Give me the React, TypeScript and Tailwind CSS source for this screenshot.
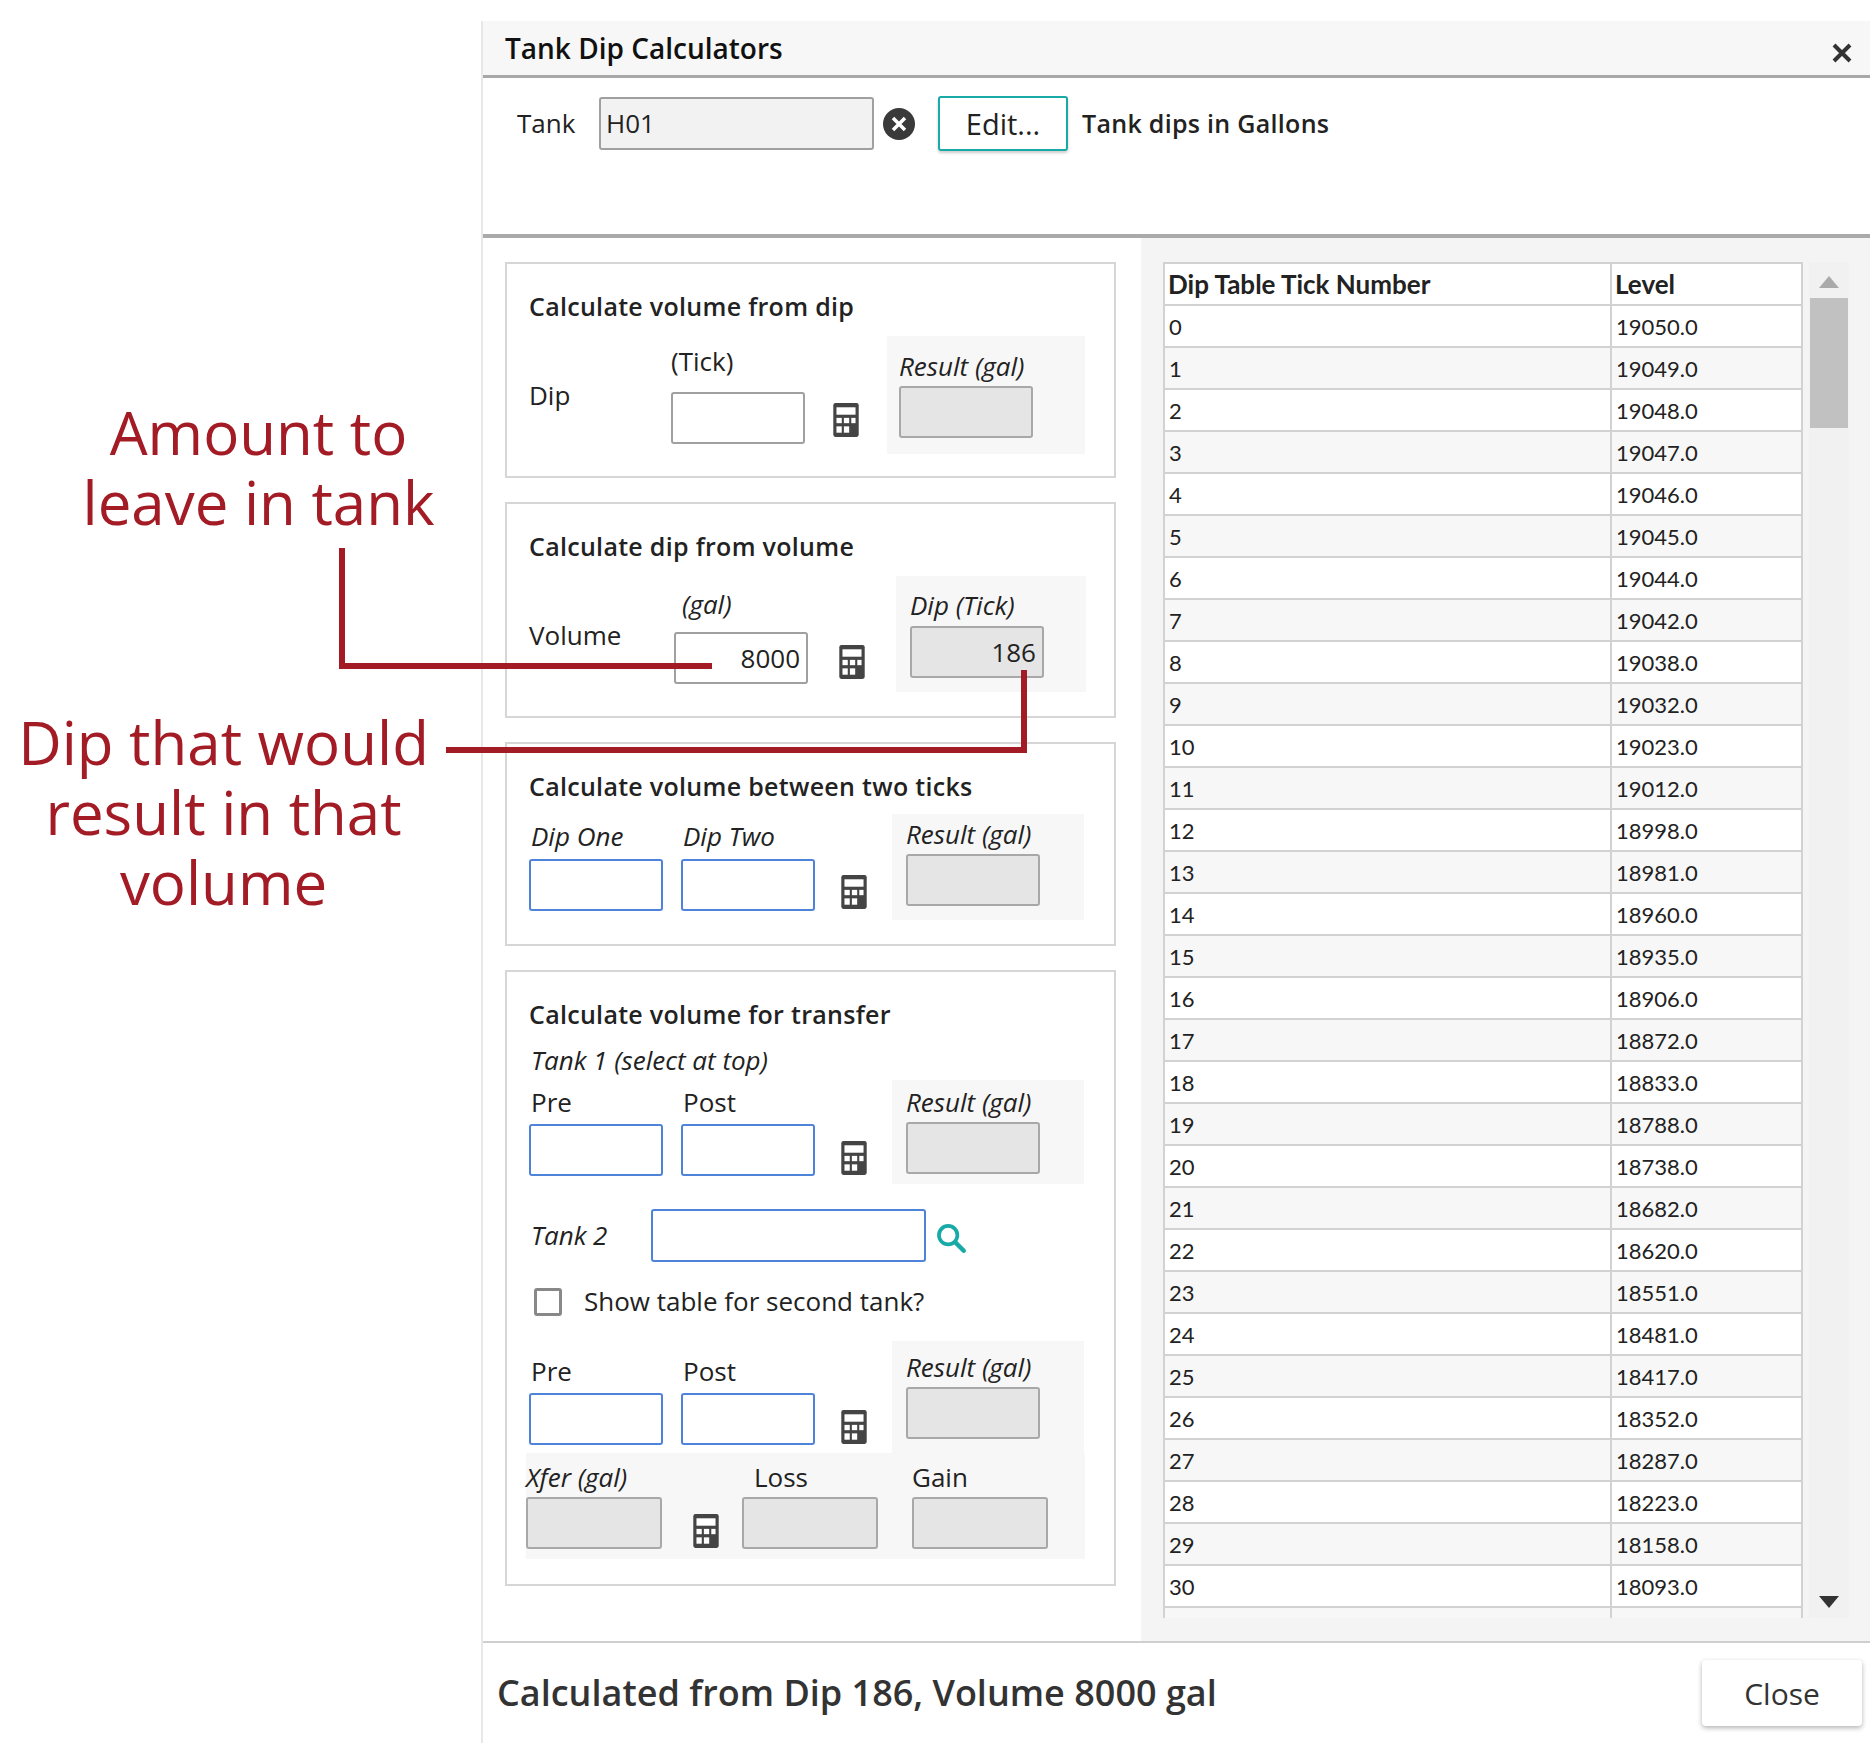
import React from "react";

const F = { fontFamily: '"Open Sans", "Noto Sans", sans-serif' };
const T = { fontFamily: 'Lato, "Noto Sans", sans-serif' };

function Inp({ kind = "gray", w = 134, h = 52, v = "" }: { kind?: string; w?: number; h?: number; v?: string }) {
  const cls =
    kind === "blue"
      ? "border-2 border-[#4f82d9] bg-white"
      : kind === "ro"
      ? "border-2 border-[#a8a8a8] bg-[#e5e5e5]"
      : "border-2 border-[#a0a0a0] bg-white";
  return (
    <div className={`${cls} rounded-[3px] flex items-center justify-end pr-[6px] text-[26px] text-[#222]`} style={{ width: w, height: h }}>
      {v}
    </div>
  );
}

function Calc() {
  return (
    <svg width="28" height="36" viewBox="0 0 26 34">
      <rect x="1" y="1" width="24" height="32" rx="2" fill="#444" />
      <rect x="4" y="5" width="18" height="7" fill="#fff" />
      <rect x="4" y="15" width="5" height="5" fill="#fff" />
      <rect x="11" y="15" width="5" height="5" fill="#fff" />
      <rect x="18" y="15" width="4" height="5" fill="#fff" />
      <rect x="4" y="23" width="5" height="6" fill="#fff" />
      <rect x="11" y="23" width="5" height="6" fill="#fff" />
    </svg>
  );
}

function Section({ title, h, children }: { title: string; h: number; children: React.ReactNode }) {
  return (
    <div className="border-2 border-[#d6d6d6] bg-white pl-[22px] pt-[26px]" style={{ height: h }}>
      <div className="text-[25px] font-semibold text-[#222] h-[32px] leading-[32px] tracking-[0.3px]">{title}</div>
      {children}
    </div>
  );
}

const levels = [19050,19049,19048,19047,19046,19045,19044,19042,19038,19032,19023,19012,18998,18981,18960,18935,18906,18872,18833,18788,18738,18682,18620,18551,18481,18417,18352,18287,18223,18158,18093,18028];

export default function App() {
  const red = "text-[#a31b24]";
  return (
    <div className="relative w-[1873px] h-[1749px] bg-white flex" style={F}>
      <div className={`w-[481px] shrink-0 ${red} text-[60px] font-medium leading-[70px] text-center`}>
        <div className="pl-[36px] mt-[397px]">Amount to<br />leave in tank</div>
        <div className="pr-[34px] mt-[170px]">Dip that would<br />result in that<br />volume</div>
      </div>
      <svg className="absolute left-0 top-0 pointer-events-none" width="1873" height="1749">
        <polyline points="342,548 342,666 712,666" fill="none" stroke="#a31b24" strokeWidth="6" />
        <polyline points="446,750 1024,750 1024,670" fill="none" stroke="#a31b24" strokeWidth="6" />
      </svg>

      <div className="mt-[21px] w-[1389px] h-[1722px] border-l-2 border-[#e8e8e8] flex flex-col">
        <div className="h-[57px] bg-[#f7f7f7] border-b-[3px] border-[#a8a8a8] flex items-center pl-[22px] pr-[16px] justify-between">
          <div className="text-[28px] font-semibold text-[#111]">Tank Dip Calculators</div>
          <svg width="24" height="24" viewBox="0 0 24 24" className="mt-[10px]"><path d="M4 4 L20 20 M20 4 L4 20" stroke="#333" strokeWidth="4" /></svg>
        </div>
        <div className="h-[160px] border-b-4 border-[#aaa] flex items-start pt-[18px]">
          <div className="flex items-center h-[55px]">
            <div className="ml-[34px] text-[26px] text-[#222] w-[82px]">Tank</div>
            <div className="w-[275px] h-[53px] border-2 border-[#a0a0a0] rounded-[3px] bg-[#f2f2f2] flex items-center pl-[5px] text-[26px] text-[#222]">H01</div>
            <svg width="34" height="34" viewBox="0 0 34 34" className="ml-[8px]"><circle cx="17" cy="17" r="16" fill="#3a3a3a" /><path d="M11 11 L23 23 M23 11 L11 23" stroke="#fff" strokeWidth="3.5" /></svg>
            <div className="ml-[22px] w-[130px] h-[55px] border-2 border-[#19aaa8] rounded-[3px] shadow-[0_2px_3px_rgba(0,0,0,0.2)] flex items-center justify-center text-[29px] text-[#222]">Edit...</div>
            <div className="ml-[14px] text-[25px] font-semibold text-[#222] tracking-[0.3px]">Tank dips in Gallons</div>
          </div>
        </div>
        <div className="flex flex-1">
          <div className="w-[658px] shrink-0 pl-[22px] pt-[24px] pr-[25px] flex flex-col gap-[24px] text-[26px] text-[#222]">
            <Section title="Calculate volume from dip" h={216}>
              <div className="flex mt-[14px]">
                <div className="w-[142px] pt-[40px]">Dip</div>
                <div className="flex flex-col">
                  <div className="h-[50px] leading-[50px]">(Tick)</div>
                  <div className="mt-[6px]"><Inp /></div>
                </div>
                <div className="w-[82px] flex justify-center pt-[66px]"><Calc /></div>
                <div className="w-[198px] h-[118px] bg-[#f7f7f7] pl-[12px] pt-[10px]">
                  <div className="italic h-[40px] leading-[40px]">Result (gal)</div>
                  <Inp kind="ro" />
                </div>
              </div>
            </Section>
            <Section title="Calculate dip from volume" h={216}>
              <div className="flex mt-[14px]">
                <div className="w-[145px] pt-[40px]">Volume</div>
                <div className="flex flex-col">
                  <div className="italic h-[56px] leading-[56px] pl-[8px]">(gal)</div>
                  <Inp v="8000" />
                </div>
                <div className="w-[88px] flex justify-center pt-[68px]"><Calc /></div>
                <div className="w-[190px] h-[116px] bg-[#f7f7f7] pl-[14px] pt-[8px]">
                  <div className="italic h-[42px] leading-[42px]">Dip (Tick)</div>
                  <Inp kind="ro" v="186" />
                </div>
              </div>
            </Section>
            <Section title="Calculate volume between two ticks" h={204}>
              <div className="flex mt-[12px]">
                <div className="flex flex-col w-[152px]">
                  <div className="italic h-[45px] leading-[45px] pl-[2px]">Dip One</div>
                  <Inp kind="blue" />
                </div>
                <div className="flex flex-col">
                  <div className="italic h-[45px] leading-[45px] pl-[2px]">Dip Two</div>
                  <Inp kind="blue" />
                </div>
                <div className="w-[77px] flex justify-center pt-[60px]"><Calc /></div>
                <div className="w-[192px] h-[106px] bg-[#f7f7f7] pl-[14px]">
                  <div className="italic h-[40px] leading-[40px]">Result (gal)</div>
                  <Inp kind="ro" />
                </div>
              </div>
            </Section>
            <Section title="Calculate volume for transfer" h={616}>
              <div className="italic mt-[10px] h-[40px] leading-[40px] pl-[2px]">Tank 1 (select at top)</div>
              <div className="flex">
                <div className="flex flex-col w-[152px]">
                  <div className="h-[44px] leading-[44px] pl-[2px]">Pre</div>
                  <Inp kind="blue" />
                </div>
                <div className="flex flex-col">
                  <div className="h-[44px] leading-[44px] pl-[2px]">Post</div>
                  <Inp kind="blue" />
                </div>
                <div className="w-[77px] flex justify-center pt-[60px]"><Calc /></div>
                <div className="w-[192px] h-[104px] bg-[#f7f7f7] pl-[14px] pt-[2px]">
                  <div className="italic h-[40px] leading-[40px]">Result (gal)</div>
                  <Inp kind="ro" />
                </div>
              </div>
              <div className="flex items-center mt-[25px]">
                <div className="italic w-[122px] pl-[2px]">Tank 2</div>
                <Inp kind="blue" w={275} h={53} />
                <svg width="34" height="34" viewBox="0 0 24 24" className="ml-[8px] mt-[4px]"><circle cx="10" cy="10" r="6.5" fill="none" stroke="#17aaa6" strokeWidth="2.6" /><path d="M15 15 L21 21" stroke="#17aaa6" strokeWidth="3.2" strokeLinecap="round" /></svg>
              </div>
              <div className="flex items-center mt-[20px]">
                <div className="ml-[5px] w-[28px] h-[28px] border-[3px] border-[#888] rounded-[3px] bg-white" />
                <div className="ml-[22px]">Show table for second tank?</div>
              </div>
              <div className="flex mt-[20px]">
                <div className="flex flex-col w-[152px]">
                  <div className="h-[44px] leading-[44px] pl-[2px] mt-[8px]">Pre</div>
                  <Inp kind="blue" />
                </div>
                <div className="flex flex-col">
                  <div className="h-[44px] leading-[44px] pl-[2px] mt-[8px]">Post</div>
                  <Inp kind="blue" />
                </div>
                <div className="w-[77px] flex justify-center pt-[68px]"><Calc /></div>
                <div className="w-[192px] h-[112px] bg-[#f7f7f7] pl-[14px] pt-[6px]">
                  <div className="italic h-[40px] leading-[40px]">Result (gal)</div>
                  <Inp kind="ro" />
                </div>
              </div>
              <div className="w-[559px] h-[106px] bg-[#f7f7f7] flex -ml-[3px] pt-[4px]">
                <div className="flex flex-col w-[166px]">
                  <div className="italic h-[40px] leading-[40px]">Xfer (gal)</div>
                  <Inp kind="ro" w={136} h={52} />
                </div>
                <div className="w-[50px] pt-[56px]"><Calc /></div>
                <div className="flex flex-col w-[170px]">
                  <div className="h-[40px] leading-[40px] pl-[12px]">Loss</div>
                  <Inp kind="ro" w={136} h={52} />
                </div>
                <div className="flex flex-col">
                  <div className="h-[40px] leading-[40px]">Gain</div>
                  <Inp kind="ro" w={136} h={52} />
                </div>
              </div>
            </Section>
          </div>
          <div className="flex-1 bg-[#f4f4f4] pl-[22px] pt-[24px] flex">
            <div className="w-[640px] h-[1356px] overflow-hidden" style={T}>
              <table className="border-collapse text-[#222] w-[640px]">
                <thead>
                  <tr className="bg-white h-[42px]">
                    <th className="border-2 border-[#d2d2d2] text-left font-bold text-[26px] pl-[3px] w-[447px]">Dip Table Tick Number</th>
                    <th className="border-2 border-[#d2d2d2] text-left font-bold text-[26px] pl-[3px]">Level</th>
                  </tr>
                </thead>
                <tbody>
                  {levels.map((l, i) => (
                    <tr key={i} className={`h-[42px] ${i % 2 ? "bg-[#f7f7f7]" : "bg-white"}`}>
                      <td className="border-2 border-[#d2d2d2] text-[22px] pl-[4px]">{i}</td>
                      <td className="border-2 border-[#d2d2d2] text-[22px] pl-[4px]">{l}.0</td>
                    </tr>
                  ))}
                </tbody>
              </table>
            </div>
            <div className="ml-[6px] w-[40px] h-[1356px] bg-[#f1f1f1] flex flex-col items-center">
              <svg width="20" height="12" viewBox="0 0 20 12" className="mt-[14px]"><path d="M0 12 L10 0 L20 12 Z" fill="#aaa" /></svg>
              <div className="mt-[10px] w-[38px] h-[130px] bg-[#c1c1c1]" />
              <div className="flex-1" />
              <svg width="20" height="12" viewBox="0 0 20 12" className="mb-[10px]"><path d="M0 0 L10 12 L20 0 Z" fill="#333" /></svg>
            </div>
          </div>
        </div>
        <div className="h-[102px] shrink-0 border-t-2 border-[#cfcfcf] flex items-center justify-between pl-[14px] pr-[8px]">
          <div className="text-[36px] font-semibold text-[#333]">Calculated from Dip 186, Volume 8000 gal</div>
          <div className="w-[160px] h-[66px] rounded-[4px] bg-white shadow-[0_2px_5px_rgba(0,0,0,0.3)] flex items-center justify-center text-[30px] text-[#333]">Close</div>
        </div>
      </div>
    </div>
  );
}
